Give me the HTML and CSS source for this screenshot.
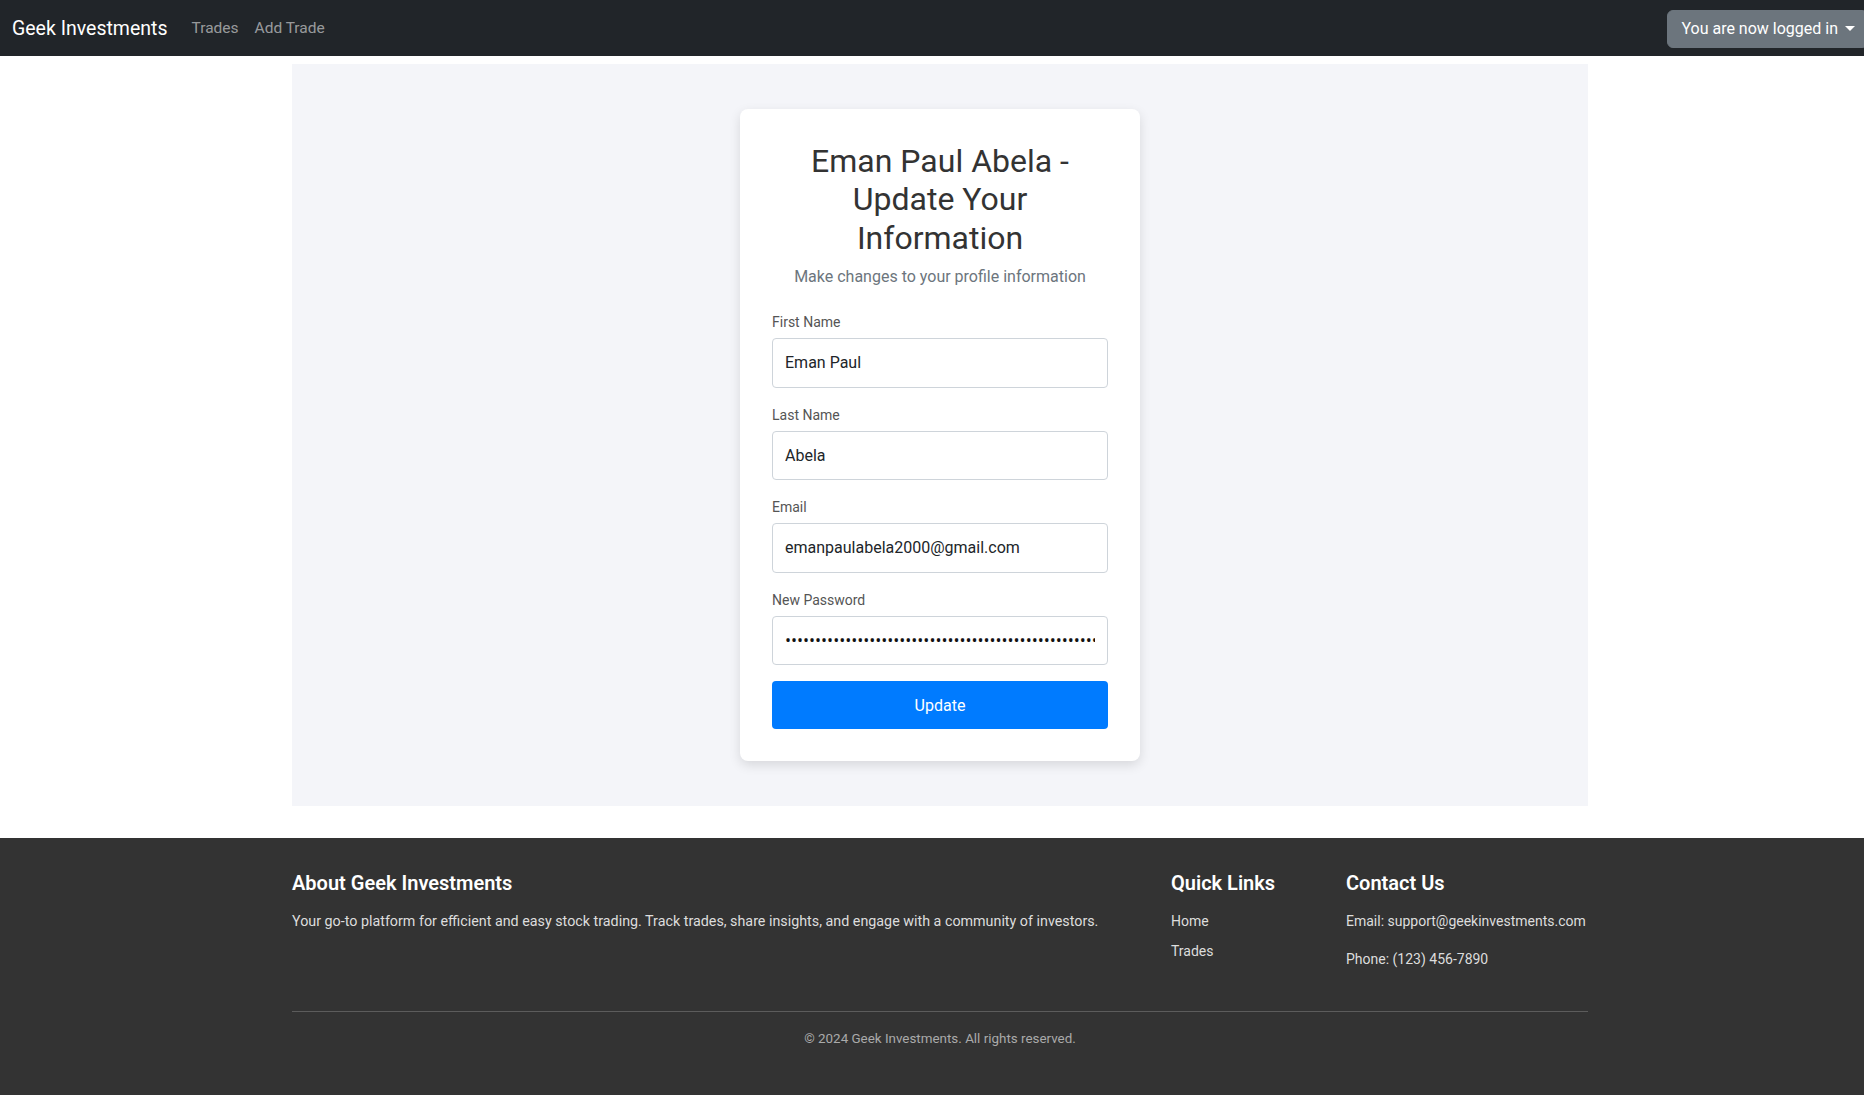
FILE: index.html
```html
<!DOCTYPE html>
<html lang="en">
<head>
<meta charset="utf-8">
<title>Geek Investments - Update Your Information</title>
<link rel="stylesheet" href="styles.css">
</head>
<body>
<nav class="navbar">
  <div class="nav-left">
    <a class="brand" href="#">Geek Investments</a>
    <a class="nav-link" href="#">Trades</a>
    <a class="nav-link" href="#">Add Trade</a>
  </div>
  <button class="dropdown-btn" type="button">You are now logged in<span class="caret"></span></button>
</nav>

<main class="container">
  <section class="panel">
    <div class="card">
      <h2 class="card-title">Eman Paul Abela - Update Your Information</h2>
      <p class="card-sub">Make changes to your profile information</p>
      <form class="form">
        <div class="group">
          <label class="label" for="fn">First Name</label>
          <input class="control" id="fn" type="text" value="Eman Paul">
        </div>
        <div class="group">
          <label class="label" for="ln">Last Name</label>
          <input class="control" id="ln" type="text" value="Abela">
        </div>
        <div class="group">
          <label class="label" for="em">Email</label>
          <input class="control" id="em" type="email" value="emanpaulabela2000@gmail.com">
        </div>
        <div class="group">
          <label class="label" for="pw">New Password</label>
          <input class="control control-pw" id="pw" type="password" value="abcdefghijklmnopqrstuvwxyzabcdefghijklmnopqrstuvwxyzabcdefgh">
        </div>
        <button class="btn-primary" type="button">Update</button>
      </form>
    </div>
  </section>
</main>

<footer class="footer">
  <div class="container">
    <div class="footer-row">
      <div class="col-about">
        <h5 class="f-head">About Geek Investments</h5>
        <p class="f-text f-about">Your go-to platform for efficient and easy stock trading. Track trades, share insights, and engage with a community of investors.</p>
      </div>
      <div class="col-links">
        <h5 class="f-head">Quick Links</h5>
        <ul class="f-list">
          <li><a href="#">Home</a></li>
          <li><a href="#">Trades</a></li>
        </ul>
      </div>
      <div class="col-contact">
        <h5 class="f-head">Contact Us</h5>
        <p class="f-text">Email: support@geekinvestments.com</p>
        <p class="f-text">Phone: (123) 456-7890</p>
      </div>
    </div>
    <hr class="f-rule">
    <p class="f-copy">&copy; 2024 Geek Investments. All rights reserved.</p>
  </div>
</footer>
</body>
</html>
```

FILE: styles.css
```css
* { box-sizing: border-box; }

html { overflow-x: hidden; }

body {
  margin: 0;
  width: 1880px;
  font-family: Roboto, "Noto Sans", "Liberation Sans", sans-serif;
  font-size: 16px;
  line-height: 1.5;
  color: #212529;
  background: #fff;
}

a { text-decoration: none; }

/* Navbar */
.navbar {
  height: 56px;
  background: #212529;
  display: flex;
  align-items: center;
  justify-content: space-between;
  padding: 1px 12px 0;
}
.nav-left { display: flex; align-items: center; }
.brand {
  color: #fff;
  font-size: 19.5px;
  line-height: 30px;
  margin-right: 16px;
}
.nav-link {
  color: rgba(255, 255, 255, 0.55);
  font-size: 15.5px;
  padding: 8px;
}
.dropdown-btn {
  font-family: inherit;
  font-size: 16px;
  line-height: 24px;
  color: #fff;
  background: #6c757d;
  border: 1px solid #6c757d;
  border-radius: 6px;
  padding: 6px 12px 6px 13px;
  display: flex;
  align-items: center;
}
.caret {
  display: inline-block;
  margin-left: 7px;
  width: 0;
  height: 0;
  border-top: 5px solid #fff;
  border-left: 5px solid transparent;
  border-right: 5px solid transparent;
}

/* Main */
.container {
  width: 1320px;
  margin: 0 auto;
  padding: 0 12px;
}
main.container { margin-top: 8px; }

.panel {
  background: #f4f5f9;
  min-height: 742px;
  display: flex;
  align-items: center;
  justify-content: center;
}

.card {
  width: 400px;
  background: #fff;
  border-radius: 8px;
  padding: 32px;
  box-shadow: 0 4px 12px rgba(0, 0, 0, 0.12);
}
.card-title {
  margin: 0 0 7px;
  padding-top: 1px;
  font-size: 32px;
  font-weight: 400;
  line-height: 1.2;
  text-align: center;
  color: #333;
}
.card-sub {
  margin: 0 0 22px;
  padding-top: 1px;
  text-align: center;
  color: #6c757d;
  font-size: 16px;
  line-height: 24px;
}
.group { margin-bottom: 16px; }
.label {
  display: block;
  font-size: 14px;
  line-height: 19px;
  padding-top: 2px;
  margin-bottom: 6px;
  color: #555;
}
.control {
  display: block;
  width: 100%;
  height: 49.5px;
  padding: 0 12px;
  font-family: inherit;
  font-size: 16px;
  color: #212529;
  background: #fff;
  border: 1px solid #ced4da;
  border-radius: 4px;
}
.control-pw {
  font-family: "Open Sans", "Noto Sans", sans-serif;
  color: #111;
}
.btn-primary {
  display: block;
  width: 100%;
  height: 48px;
  font-family: inherit;
  font-size: 16px;
  color: #fff;
  background: #007bff;
  border: 0;
  border-radius: 4px;
}

/* Footer */
.footer {
  margin-top: 32px;
  background: #333;
  color: #ddd;
  padding: 33px 0 48px;
}
.footer-row { display: flex; }
.col-about { flex: 1; }
.col-links { width: 175px; }
.col-contact { width: 242px; }
.f-head {
  margin: 0 0 16px;
  font-size: 20px;
  font-weight: 600;
  line-height: 24px;
  color: #fff;
}
.f-text {
  margin: 0 0 17px;
  font-size: 14px;
  line-height: 21px;
  color: #ddd;
}
.f-about { font-size: 14.3px; }
.f-list { list-style: none; margin: 0; padding: 0; }
.f-list li { font-size: 14px; line-height: 21px; margin-bottom: 9px; }
.f-list a { color: #ddd; }
.f-rule {
  margin: 24px 0 16px;
  border: 0;
  border-top: 1px solid #5c5c5c;
}
.f-copy {
  margin: 0;
  text-align: center;
  font-size: 13.4px;
  line-height: 21px;
  color: #aaa;
}
```
